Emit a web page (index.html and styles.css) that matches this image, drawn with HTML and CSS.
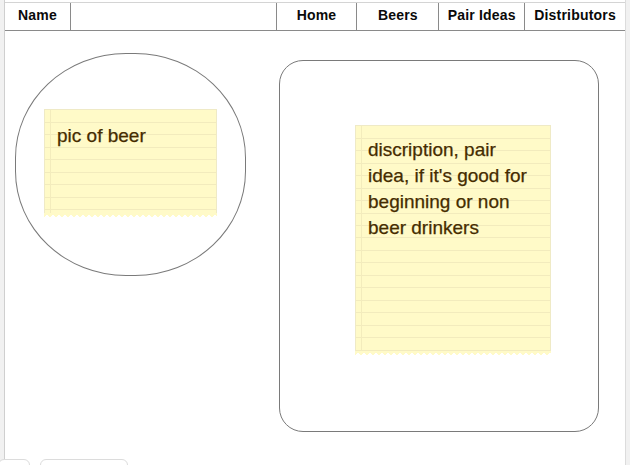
FILE: index.html
```html
<!DOCTYPE html>
<html>
<head>
<meta charset="utf-8">
<link rel="stylesheet" href="styles.css">
</head>
<body>
<div class="frame">
  <nav class="nav">
    <div class="cell c-name">Name</div>
    <div class="cell c-blank"></div>
    <div class="cell c-home">Home</div>
    <div class="cell c-beers">Beers</div>
    <div class="cell c-pair">Pair Ideas</div>
    <div class="cell c-dist">Distributors</div>
  </nav>
  <main class="content">
    <div class="blob">
      <div class="note note-small"><p>pic of beer</p></div>
    </div>
    <div class="card">
      <div class="note note-big"><p>discription, pair idea, if it's good for beginning or non beer drinkers</p></div>
    </div>
  </main>
</div>
<div class="tabs">
  <div class="tab tab-a"></div>
  <div class="tab tab-b"></div>
</div>
</body>
</html>
```
FILE: styles.css
```css
html, body {
  margin: 0;
  padding: 0;
  width: 630px;
  height: 465px;
  overflow: hidden;
  background: #f1f1f1;
  font-family: "Liberation Sans", Arial, sans-serif;
  position: relative;
}
.frame {
  margin-left: 4px;
  width: 622px;
  height: 465px;
  background: #fff;
  border-left: 1px solid #cfcfcf;
  border-right: 1px solid #dcdcdc;
  box-sizing: border-box;
  display: flex;
  flex-direction: column;
  padding-top: 2px;
}
.nav {
  display: flex;
  height: 29px;
  border-top: 1px solid #d4d4d4;
  border-bottom: 1px solid #8a8a8a;
  box-sizing: border-box;
}
.cell {
  box-sizing: border-box;
  border-right: 1px solid #8a8a8a;
  font-weight: bold;
  font-size: 14px;
  color: #0a0a0a;
  text-align: center;
  line-height: 25px;
  letter-spacing: 0.2px;
}
.c-name { width: 66px; }
.c-blank { width: 206px; }
.c-home { width: 81px; }
.c-beers { width: 82px; }
.c-pair { width: 86px; }
.c-dist { width: 100px; border-right: none; }
.content {
  display: flex;
  align-items: flex-start;
}
.blob {
  margin-left: 10px;
  margin-top: 22px;
  width: 231px;
  height: 223px;
  box-sizing: border-box;
  border: 1px solid #7a7a7a;
  border-radius: 48% / 47%;
  padding: 55px 0 0 28px;
}
.card {
  margin-left: 33px;
  margin-top: 29px;
  width: 320px;
  height: 372px;
  box-sizing: border-box;
  border: 1px solid #7a7a7a;
  border-radius: 24px;
  padding: 64px 0 0 75px;
}
.note {
  position: relative;
  box-sizing: border-box;
  background-color: #fffac8;
  background-image:
    linear-gradient(to right, transparent 5px, #f3ecbc 5px, #f3ecbc 6px, transparent 6px),
    repeating-linear-gradient(to bottom, transparent 0, transparent 11.5px, #f2ebbd 11.5px, #f2ebbd 12.5px);
  border: 1px solid #efeac6;
  border-bottom: none;
  color: #452c00;
  font-size: 19px;
  -webkit-text-stroke: 0.25px #452c00;
}
.note::after {
  content: "";
  position: absolute;
  left: -1px;
  right: -1px;
  bottom: -4px;
  height: 4px;
  background:
    linear-gradient(135deg, #fffac8 50%, transparent 50%) 0 0 / 6px 4px repeat-x,
    linear-gradient(225deg, #fffac8 50%, transparent 50%) 0 0 / 6px 4px repeat-x;
}
.note p { margin: 0; }
.note-small {
  width: 173px;
  height: 104px;
  padding: 15px 0 0 12px;
}
.note-big {
  width: 196px;
  height: 226px;
  padding: 11px 0 0 12px;
  line-height: 26px;
}
.note-big p { width: 164px; }
.tabs {
  position: absolute;
  left: 0;
  top: 459px;
  display: flex;
  gap: 10px;
}
.tab {
  height: 10px;
  background: #fff;
  border: 1px solid #dcdcdc;
  border-radius: 6px 6px 0 0;
}
.tab-a { width: 30px; margin-left: -2px; }
.tab-b { width: 86px; }
```
